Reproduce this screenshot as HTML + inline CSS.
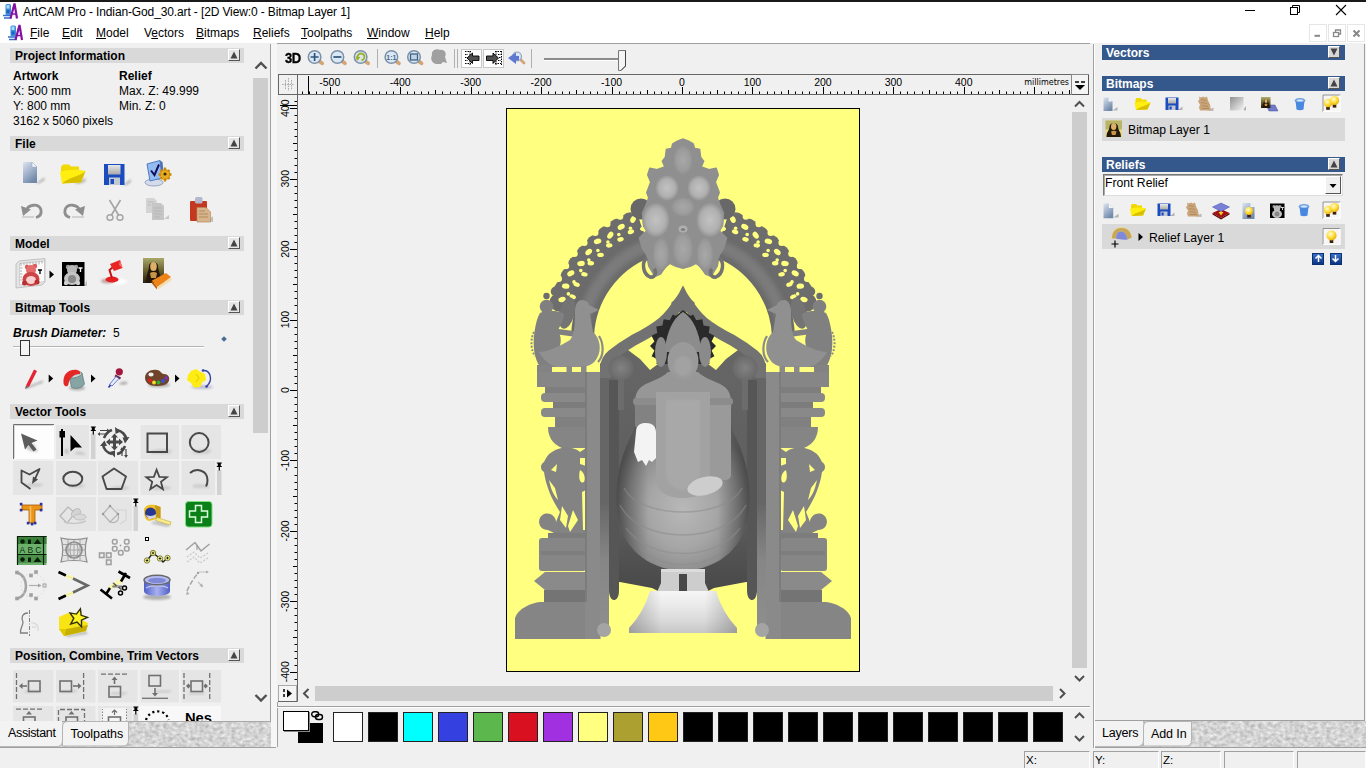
<!DOCTYPE html>
<html><head><meta charset="utf-8"><title>ArtCAM Pro</title>
<style>
*{box-sizing:border-box;margin:0;padding:0}
html,body{width:1366px;height:768px;overflow:hidden;background:#f0f0f0;font-family:"Liberation Sans",sans-serif;font-size:12px;color:#000}
.a{position:absolute}
#titlebar{left:0;top:0;width:1366px;height:22px;background:#fff;border-top:2px solid #1a1a1a}
#title{left:23px;top:5px;font-size:12px;white-space:nowrap;letter-spacing:-.125px}
#menubar{left:0;top:22px;width:1366px;height:21px;background:#fff}
#menubar span{position:absolute;top:4px;font-size:12px;white-space:nowrap}
#menubar u{text-decoration:underline;text-underline-offset:1px}
.hdrL{left:10px;width:234px;height:15px;background:#d9d9d9;font-weight:bold;font-size:12px;line-height:17px;overflow:hidden;padding-left:5px;white-space:nowrap}
.hdrR{left:1102px;width:243px;height:15px;background:#35588c;color:#fff;font-weight:bold;font-size:12px;line-height:17px;overflow:hidden;padding-left:4px;white-space:nowrap}
.colbtn{width:12px;height:12px;background:#e6e6e6;border:1px solid;border-color:#fff #555 #555 #fff}
.t{white-space:nowrap;font-size:12px;line-height:14px}
</style></head><body>
<!-- TITLE -->
<div id="titlebar" class="a"></div>
<div id="title" class="a">ArtCAM Pro - Indian-God_30.art - [2D View:0 - Bitmap Layer 1]</div>
<div id="menubar" class="a">
<span style="left:30px"><u>F</u>ile</span><span style="left:62px"><u>E</u>dit</span><span style="left:96px"><u>M</u>odel</span><span style="left:144px">V<u>e</u>ctors</span><span style="left:196px"><u>B</u>itmaps</span><span style="left:253px"><u>R</u>eliefs</span><span style="left:301px"><u>T</u>oolpaths</span><span style="left:367px"><u>W</u>indow</span><span style="left:425px"><u>H</u>elp</span>
</div>
<!--CTL--><svg class="a" style="left:0;top:0" width="1366" height="44" viewBox="0 0 1366 44"><g transform="translate(2 3)"><path d="M1 12.500H10M2 15H9.500" stroke="#3070c8" stroke-width="1.600"/><rect x="3.500" y="1" width="5.500" height="11" rx="1.500" fill="#3c8cdc"/><rect x="4.500" y="2" width="3" height="3.500" fill="#a8dcf8"/><rect x="4.500" y="7" width="3" height="3" fill="#2060b8"/><path d="M8.500 15.500L12.500 .5L15 15.500" stroke="#8410a4" stroke-width="2.200" fill="none" stroke-linejoin="miter"/><path d="M10 11H14" stroke="#8410a4" stroke-width="1.500"/></g><g transform="translate(7 24.500)"><path d="M1 12.500H10M2 15H9.500" stroke="#3070c8" stroke-width="1.600"/><rect x="3.500" y="1" width="5.500" height="11" rx="1.500" fill="#3c8cdc"/><rect x="4.500" y="2" width="3" height="3.500" fill="#a8dcf8"/><rect x="4.500" y="7" width="3" height="3" fill="#2060b8"/><path d="M8.500 15.500L12.500 .5L15 15.500" stroke="#8410a4" stroke-width="2.200" fill="none" stroke-linejoin="miter"/><path d="M10 11H14" stroke="#8410a4" stroke-width="1.500"/></g><path d="M1245 10.500H1255" stroke="#000" stroke-width="1"/><path d="M1292.500 7.500V5.500H1299.500V12.500H1297.500" stroke="#000" fill="none"/><rect x="1290.500" y="7.500" width="7" height="7" fill="#fff" stroke="#000"/><path d="M1336 5L1346 15M1346 5L1336 15" stroke="#000" stroke-width="1.100"/><rect x="1309.5" y="24.500" width="17" height="17" fill="#fff" stroke="#e6e6e6"/><rect x="1328.5" y="24.500" width="17" height="17" fill="#fff" stroke="#e6e6e6"/><rect x="1347.5" y="24.500" width="17" height="17" fill="#fff" stroke="#e6e6e6"/><path d="M1314.500 35.800H1320" stroke="#888" stroke-width="2"/><path d="M1335.500 32V30H1340.500V34H1338.500" stroke="#888" stroke-width="1.300" fill="none"/><rect x="1333.500" y="32.500" width="5" height="4" fill="#fff" stroke="#888" stroke-width="1.300"/><path d="M1353.500 30.500L1359.500 36.500M1359.500 30.500L1353.500 36.500" stroke="#888" stroke-width="2"/></svg>
<!--/CTL-->
<!--LEFT-->
<div class="a" style="left:270px;top:44px;width:1px;height:677px;background:#a0a0a0"></div><div class="a" style="left:271px;top:44px;width:6px;height:703px;background:#f6f6f6"></div>
<div class="a hdrL" style="top:48px">Project Information</div><div class="a colbtn" style="left:228px;top:49px"><svg width="10" height="10" style="position:absolute;left:0;top:0"><path d="M5 1.5L8.5 8.5H1.5Z" fill="#444"/></svg></div>
<div class="a t" style="left:13px;top:69px;font-weight:bold">Artwork</div><div class="a t" style="left:119px;top:69px;font-weight:bold">Relief</div>
<div class="a t" style="left:13px;top:84px">X: 500 mm</div><div class="a t" style="left:119px;top:84px">Max. Z: 49.999</div>
<div class="a t" style="left:13px;top:99px">Y: 800 mm</div><div class="a t" style="left:119px;top:99px">Min. Z: 0</div>
<div class="a t" style="left:13px;top:114px">3162 x 5060 pixels</div>
<div class="a hdrL" style="top:136px">File</div><div class="a colbtn" style="left:228px;top:137px"><svg width="10" height="10" style="position:absolute;left:0;top:0"><path d="M5 1.5L8.5 8.5H1.5Z" fill="#444"/></svg></div>
<!--FILEICONS--><svg class="a" style="left:0;top:0" width="272" height="721" viewBox="0 0 272 721"><defs><clipPath id="cutA"><rect x="0" y="700" width="252" height="21"/></clipPath></defs><defs>
<linearGradient id="gdoc" x1="0" y1="0" x2=".6" y2="1"><stop offset="0" stop-color="#dce4f0"/><stop offset="1" stop-color="#7088aa"/></linearGradient>
<linearGradient id="glab" x1="0" y1="0" x2="0" y2="1"><stop offset="0" stop-color="#e8e8e8"/><stop offset="1" stop-color="#a8a8a8"/></linearGradient>
<linearGradient id="gring" x1="0" y1="0" x2="1" y2="0"><stop offset="0" stop-color="#5060c8"/><stop offset=".5" stop-color="#a8b0f0"/><stop offset="1" stop-color="#5060c8"/></linearGradient>
<linearGradient id="gmona" x1="0" y1="0" x2="0" y2="1"><stop offset="0" stop-color="#a8a868"/><stop offset=".5" stop-color="#6a6030"/><stop offset="1" stop-color="#2a2010"/></linearGradient>
<filter id="ib" x="-30%" y="-30%" width="160%" height="160%"><feGaussianBlur stdDeviation=".8"/></filter>
</defs><g transform="translate(23 161)"><path d="M13 22.500L21 16.500L22 19L16 22.500Z" fill="#b4b4b4" filter="url(#ib)"/><path d="M0 1H9L14 6V22H0Z" fill="url(#gdoc)"/><path d="M9 1V6H14Z" fill="#f2f5fa" stroke="#98a8c0" stroke-width=".5"/></g><g transform="translate(60 163)"><path d="M14 20L26 15L25 19L18 21Z" fill="#b8b8b8" filter="url(#ib)"/><path d="M1 4L3 1.500H9L11 3.500H19V10H1Z" fill="#f0d800"/><path d="M0 9C6 6.500 18 6 25.500 8L21 19.500L2 20.500Z" fill="#ffee10"/><path d="M2 20.500L21 19.500L25.500 8C21 13 9 14 2 20.500Z" fill="#d8c000"/></g><g transform="translate(104 164)"><path d="M19 21L27 15L27 18L22 21.500Z" fill="#b4b4b4" filter="url(#ib)"/><path d="M0 0H20.500V21H0Z" fill="#1a4cc0"/><rect x="4" y="1" width="12.500" height="9.500" fill="url(#glab)"/><rect x="5" y="13.500" width="11" height="7.500" fill="#c4c8d0"/><rect x="6.500" y="15" width="3.500" height="5" fill="#1a4cc0"/></g><g transform="translate(144 160)"><ellipse cx="10" cy="22.500" rx="9" ry="3.500" fill="#d4dcec" stroke="#8494b4" stroke-width=".8"/><path d="M3 4L16 .5L18 18L6 21Z" fill="#94bcf0" stroke="#4c7cc4"/><path d="M16 .5L18.500 2L20 18L18 18Z" fill="#5070b0"/><path d="M7 10.500L10.500 15L15 4.500" stroke="#141060" stroke-width="2" fill="none"/><circle cx="21" cy="14.500" r="5.500" fill="#e4a41c"/><path d="M21 7.500V21.500M14.500 14.500H27.500M16.500 10L25.500 19M25.500 10L16.500 19" stroke="#c88810" stroke-width="2.400"/><circle cx="21" cy="14.500" r="4" fill="#e8ac24"/><circle cx="21" cy="14" r="1.600" fill="#3a2808"/></g><g transform="translate(21 202)"><path d="M5.500 9C6.500 2 18 1 20 8C20.800 12 18.500 14.500 15 15.500" stroke="#8e8e8e" stroke-width="2.800" fill="none"/><path d="M0 4L10 7.500L2 14Z" fill="#8e8e8e"/><path d="M1 15H13" stroke="#c8c8c8" stroke-width="1.500"/></g><g transform="translate(63 202)"><g transform="translate(22 0) scale(-1 1)"><path d="M5.500 9C6.500 2 18 1 20 8C20.800 12 18.500 14.500 15 15.500" stroke="#8e8e8e" stroke-width="2.800" fill="none"/><path d="M0 4L10 7.500L2 14Z" fill="#8e8e8e"/><path d="M1 15H13" stroke="#c8c8c8" stroke-width="1.500"/></g></g><g transform="translate(106 199)"><path d="M3.500 1L12.500 16M14.500 1L5.500 16" stroke="#a4a4a4" stroke-width="1.600"/><ellipse cx="4" cy="18.500" rx="3" ry="2.800" fill="none" stroke="#a4a4a4" stroke-width="1.400"/><ellipse cx="14" cy="18.500" rx="3" ry="2.800" fill="none" stroke="#a4a4a4" stroke-width="1.400"/></g><g transform="translate(146 198)"><path d="M18 21L23 17V21Z" fill="#c8c8c8"/><path d="M0 0H8L11 3V15H0Z" fill="#d4d4d4"/><path d="M6 5H15L18 8V22H6Z" fill="#c6c6c6"/><path d="M1.500 4H8M1.500 7H5M8 10H16M8 13H16M8 16H16M8 19H14" stroke="#b4b4b4" stroke-width=".8"/></g><g transform="translate(190 196)"><path d="M17 25L23 20V26Z" fill="#c0c0c0"/><rect x="0" y="5" width="17" height="20" rx="1" fill="#c43820"/><rect x="5" y="1" width="7.500" height="6.500" rx="1.500" fill="#b4b8cc"/><path d="M7 11.500H16L20.500 16V26H7Z" fill="#d8b48c" stroke="#b48c5c" stroke-width=".7"/><path d="M9 15H15M9 18H18M9 21H18" stroke="#a88050" stroke-width=".8"/></g><g transform="translate(15 258)"><path d="M1 6L4 3L30 .5L30 24L27 27L1 30Z" fill="#e4e4e4" stroke="#b0b0b0" stroke-width=".7"/><path d="M4.500 5.500L29.500 3V23.500L4.500 27Z" fill="#fafafa" stroke="#b8b8b8" stroke-width=".6"/><path d="M6 5V8M9 4.800V7M12 4.500V7.500M15 4.200V6.500M18 4V7M21 3.700V6M24 3.500V6.500M27 3.200V5.500M5 10H7.500M5 13H7M5 16H7.500M5 19H7M5 22H7.500" stroke="#909090" stroke-width=".7"/><circle cx="12" cy="9" r="2.200" fill="#e05858"/><circle cx="20" cy="8" r="2.200" fill="#e05858"/><circle cx="16" cy="12" r="5" fill="#e46c6c"/><ellipse cx="16" cy="21" rx="8.500" ry="7" fill="#cc4444"/><ellipse cx="16" cy="22" rx="5" ry="4" fill="#f8d0d0"/><circle cx="9.500" cy="25" r="2.500" fill="#b83030"/><circle cx="22" cy="24" r="2.500" fill="#b83030"/><path d="M23 12H27M25 12V16" stroke="#000" stroke-width="1.300"/></g><g transform="translate(49.5 270.5)"><path d="M0 0V8L4.500 4Z" fill="#000"/></g><g transform="translate(62 262)"><path d="M22 24L25 18V24Z" fill="#c0c0c0"/><rect x="0" y="0" width="22.500" height="24" fill="#000"/><circle cx="6" cy="5" r="2.200" fill="#a0a0a0"/><circle cx="14" cy="5" r="2.200" fill="#a0a0a0"/><circle cx="10" cy="8" r="5" fill="#b8b8b8"/><ellipse cx="10" cy="16.500" rx="8" ry="6.500" fill="#c4c4c4"/><ellipse cx="10" cy="17" rx="4" ry="4" fill="#888"/><circle cx="4" cy="21" r="2.200" fill="#d0d0d0"/><circle cx="16" cy="21" r="2.200" fill="#d0d0d0"/><path d="M16.500 6H20.500M18.500 6V10" stroke="#fff" stroke-width="1.300"/></g><g transform="translate(100 260)"><ellipse cx="16" cy="21.500" rx="11" ry="3" fill="#fff" filter="url(#ib)"/><ellipse cx="8" cy="21" rx="7" ry="2.500" fill="#c0a0a0" filter="url(#ib)"/><ellipse cx="12" cy="19.500" rx="6.500" ry="3" fill="#e42020"/><path d="M12 18L9.500 10L13 7" stroke="#c41414" stroke-width="2" fill="none"/><path d="M10 4L20 0L22.500 8L14 11Z" fill="#e82424"/><path d="M20 0L22.500 8L19 5Z" fill="#f87070"/></g><g transform="translate(143 258)"><rect x="0" y="0" width="21" height="25" fill="url(#gmona)"/><path d="M3 25C3 16 6 13 6 8C6 3 15 3 15 8C15 13 18 16 18 25Z" fill="#241808"/><ellipse cx="10.500" cy="8.500" rx="3.300" ry="4.500" fill="#dcb068"/><path d="M7 15C9 13.500 12 13.500 14 15L13 20H8Z" fill="#c89448"/><path d="M27 19L29 22L15 31.500L14 29Z" fill="#f4dcb0"/><path d="M9 22.500L23 15L28 19L14 29Z" fill="#ec8418"/><path d="M9 22.500L14 29L14 31.500L8.500 25Z" fill="#b45c0c"/></g><g transform="translate(24 368)"><path d="M2 20L19 13.500" stroke="#b4b4b4" stroke-width="2.200" filter="url(#ib)"/><path d="M2 17.500L10 1.500L13 3L5 19Z" fill="#e42434"/><path d="M2 17.500L5 19L1 21Z" fill="#805858"/></g><g transform="translate(48.7 374.5)"><path d="M0 0V8L4.500 4Z" fill="#000"/></g><g transform="translate(63 369)"><ellipse cx="14" cy="19" rx="8" ry="2.500" fill="#b0b0b0" filter="url(#ib)"/><path d="M6 8L19 4L21.500 15C19 19.500 11 20.500 8.500 18Z" fill="#86a4a4" stroke="#5c7878" stroke-width=".7"/><ellipse cx="12.500" cy="6" rx="6.800" ry="2.500" transform="rotate(-17 12.500 6)" fill="#c8d8d8" stroke="#5c7878" stroke-width=".7"/><path d="M.5 14C0 6 4 1 12 .8C16 .8 18 3 17 5C12 5 6.500 8 5.500 15C5 18.500 1 18 .5 14Z" fill="#e42828"/></g><g transform="translate(91 374.5)"><path d="M0 0V8L4.500 4Z" fill="#000"/></g><g transform="translate(107 368)"><path d="M12 16C15 13 19 13 21 15C19 17 15 17.500 12 16Z" fill="#b0b0b0" filter="url(#ib)"/><circle cx="12.300" cy="3.800" r="3.600" fill="#a41840"/><path d="M8.500 6.500L14 9.500L13 11.500L7.500 8.500Z" fill="#70203c"/><path d="M9 8.500L12 10.500L5 18L2.500 16.500Z" fill="#e8eefc" stroke="#4858c0" stroke-width=".8"/><path d="M3.500 17L1.500 19.500" stroke="#2838a8" stroke-width="1.600"/></g><g transform="translate(144 369)"><ellipse cx="15" cy="16" rx="11" ry="2.500" fill="#b4b4b4" filter="url(#ib)"/><path d="M1 9C1 3 7 0 13 1C17 1.500 17 5 20 5C24 5 26 8 25 11.500C24 16 18 17 12 17C6 17 1 14 1 9Z" fill="#70442a"/><ellipse cx="7" cy="5.500" rx="2.600" ry="2" fill="#f0f0f0"/><circle cx="6" cy="11.500" r="1.900" fill="#e02020"/><circle cx="10" cy="13.500" r="1.900" fill="#f0e020"/><circle cx="14.500" cy="13.500" r="1.900" fill="#30b030"/><circle cx="19" cy="12" r="1.900" fill="#3050e0"/><circle cx="22" cy="9" r="1.700" fill="#8030c0"/></g><g transform="translate(175 374.5)"><path d="M0 0V8L4.500 4Z" fill="#000"/></g><g transform="translate(186 368)"><ellipse cx="16" cy="19" rx="11" ry="2" fill="#c0c0d0" filter="url(#ib)"/><path d="M17 2.500C24.500 2 27.500 12 20.500 18.500" stroke="#3444a4" stroke-width="1.400" fill="none"/><circle cx="17" cy="2.500" r="1.300" fill="#3444a4"/><circle cx="20.500" cy="18.500" r="1.300" fill="#3444a4"/><path d="M5 3L10 1L14 3.500L19 6L20 12L16 14.500L14 19L8 19.500L5 15L1 12L2 7Z" fill="#ffec14"/><path d="M10 6L13 10L10 14" stroke="#e4d000" stroke-width="1.200" fill="none"/></g><rect x="13" y="424" width="41" height="35" fill="#fdfdfd"/><path d="M13.500 459V424.500H54" stroke="#707070" fill="none"/><path d="M14.500 458V425.500H53" stroke="#d8d8d8" fill="none"/><path d="M24 447L34 444L38 452L30 451Z" fill="#c8c8c8" filter="url(#ib)"/><path d="M21 433.500L37.500 440.500L31.500 443L36.500 449.500L33.500 451.500L28.500 445L25 449.500Z" fill="#5c5c5c"/><rect x="56" y="425" width="33" height="34" fill="#e5e5e5"/><path d="M64 452C66 446 70 448 68 455M74 454C78 450 84 452 86 455Z" fill="#c4c4c4" filter="url(#ib)"/><path d="M62 429V456" stroke="#000" stroke-width="2"/><rect x="59.500" y="431" width="5.500" height="6.500" fill="#000"/><path d="M70.500 435L82 447.500H75L70.500 451.500Z" fill="#000"/><rect x="91" y="434" width="4.500" height="25" fill="#d2d2d2"/><path d="M90.8 427.0H95.8M90.8 430.5H95.8M93.3 430.5V434.5" stroke="#000" stroke-width="1.200"/><rect x="91.8" y="427.0" width="3" height="3.500" fill="#000"/><g fill="#484848" stroke="none"><path d="M114.500 433.500L118 437.500H116V440.500H119V438.500L123 442L119 445.500V443.500H116V446.500H118L114.500 450.500L111 446.500H113V443.500H110V445.500L106 442L110 438.500V440.500H113V437.500H111Z"/></g><path d="M104 438C106 433 109 431 112 430" stroke="#484848" stroke-width="2.600" fill="none"/><path d="M117 430C122 431 126 435 126.500 440" stroke="#484848" stroke-width="2.600" fill="none"/><path d="M125 446C123 451 120 453.500 117 454" stroke="#484848" stroke-width="2.600" fill="none"/><path d="M112 454C107 453 103.500 449 103 444" stroke="#484848" stroke-width="2.600" fill="none"/><path d="M115 427L121 431.500L115.500 434Z M129.500 437L125 443.500L122.500 437.500Z M115 457.500L109.500 452L115 450.500Z M100 446L104.500 440.500L107 446Z" fill="#484848"/><path d="M100 430.500H107M100 434H107" stroke="#484848" stroke-width="1.200"/><path d="M107 428.500L109.500 430.500L107 432.500Z M100 432L97.500 434L100 436Z" fill="#484848"/><path d="M122 449V456M126 449V456" stroke="#484848" stroke-width="1.200"/><path d="M120 450L122 447L124 450Z M124 455L126 458L128 455Z" fill="#484848"/><rect x="140.5" y="425" width="38.5" height="34" fill="#e5e5e5"/><path d="M150 451C158 448 166 449 172 450L170 454H152Z" fill="#cfcfcf" filter="url(#ib)"/><rect x="147.500" y="433.500" width="19.500" height="18.500" fill="none" stroke="#484848" stroke-width="2"/><rect x="181.5" y="425" width="39.5" height="34" fill="#e5e5e5"/><path d="M192 452C200 448 208 449 212 450L208 454H194Z" fill="#cfcfcf" filter="url(#ib)"/><circle cx="199.200" cy="442.500" r="9.400" fill="none" stroke="#484848" stroke-width="2"/><rect x="13" y="461" width="40.5" height="34" fill="#e5e5e5"/><path d="M24 485C30 482 38 483 44 484L40 487H28Z" fill="#cfcfcf" filter="url(#ib)"/><path d="M30.500 489L21.500 482.500V470.500L29.500 474.500L39.500 469L34 481" stroke="#484848" stroke-width="1.800" fill="none" stroke-linejoin="round"/><path d="M32 484L33 476.500L38 479.500Z" fill="#484848"/><rect x="56" y="461" width="40.5" height="34" fill="#e5e5e5"/><path d="M68 486C74 483 82 484 86 485L82 488H70Z" fill="#cfcfcf" filter="url(#ib)"/><ellipse cx="72.800" cy="478.800" rx="9.500" ry="7" fill="none" stroke="#484848" stroke-width="2"/><rect x="98" y="461" width="40" height="34" fill="#e5e5e5"/><path d="M110 488C116 485 124 486 130 487L126 490H112Z" fill="#cfcfcf" filter="url(#ib)"/><path d="M114 468.500L126 476.500L121.500 489H106.500L102.500 476.500Z" fill="none" stroke="#484848" stroke-width="1.900" stroke-linejoin="round"/><rect x="140.5" y="461" width="38.5" height="34" fill="#e5e5e5"/><path d="M152 488C158 485 166 486 172 487L168 490H154Z" fill="#cfcfcf" filter="url(#ib)"/><path d="M156.6 469.7L159.3 476.8L166.9 477.2L161.0 481.9L162.9 489.2L156.6 485.1L150.3 489.2L152.2 481.9L146.3 477.2L153.9 476.8Z" fill="none" stroke="#484848" stroke-width="1.800" stroke-linejoin="miter"/><rect x="181.5" y="461" width="33.5" height="34" fill="#e5e5e5"/><path d="M192 485C198 483 204 484 210 486L208 488H194Z" fill="#cfcfcf" filter="url(#ib)"/><path d="M190 473C196 467.500 207.500 470 207.500 480C207.500 483 207 485 206 486.500" fill="none" stroke="#484848" stroke-width="2"/><rect x="217" y="470" width="4.500" height="25" fill="#d2d2d2"/><path d="M216.8 463.0H221.8M216.8 466.5H221.8M219.3 466.5V470.5" stroke="#000" stroke-width="1.200"/><rect x="217.8" y="463.0" width="3" height="3.500" fill="#000"/><g transform="translate(20 503)"><path d="M3 17H22" stroke="#c0c0c0" stroke-width="3" filter="url(#ib)"/><path d="M2 2H22V7H15V20H9V7H2Z" fill="#ec9418" stroke="#a45c08" stroke-width=".8"/><path d="M10.500 3V19" stroke="#f8c060" stroke-width="1.500"/><rect x="-0.19999999999999996" y="-0.19999999999999996" width="2.600" height="2.600" fill="#2830a0"/><rect x="19.8" y="-0.19999999999999996" width="2.600" height="2.600" fill="#2830a0"/><rect x="-0.19999999999999996" y="5.8" width="2.600" height="2.600" fill="#2830a0"/><rect x="19.8" y="5.8" width="2.600" height="2.600" fill="#2830a0"/><rect x="6.8" y="18.8" width="2.600" height="2.600" fill="#2830a0"/><rect x="13.8" y="18.8" width="2.600" height="2.600" fill="#2830a0"/><rect x="10.8" y="19.8" width="2.600" height="2.600" fill="#2830a0"/></g><rect x="56" y="497" width="40" height="34" fill="#e5e5e5"/><path d="M60 516L68 507L75 513L67 523Z" fill="none" stroke="#b4b4b4" stroke-width="1.200"/><ellipse cx="76" cy="513" rx="5" ry="3.500" transform="rotate(-40 76 513)" fill="#d4d4d4" stroke="#b8b8b8"/><ellipse cx="80" cy="517" rx="6" ry="3" fill="#dadada" stroke="#c0c0c0"/><path d="M64 522C70 524 80 524 86 521" stroke="#c8c8c8" stroke-width="1.500" fill="none"/><rect x="98" y="497" width="34" height="34" fill="#e5e5e5"/><path d="M103 514L110 506L118 514L110 522Z" fill="none" stroke="#b4b4b4" stroke-width="1.200"/><path d="M110 522C116 524 120 520 118 514" fill="none" stroke="#b4b4b4" stroke-width="1.200"/><circle cx="103" cy="514" r="1.200" fill="#999"/><circle cx="110" cy="506" r="1.200" fill="#999"/><circle cx="118" cy="514" r="1.200" fill="#999"/><path d="M116 510H126V520L120 524" fill="none" stroke="#d4d4d4" stroke-width="1.200"/><rect x="133.5" y="506" width="4.500" height="25" fill="#d2d2d2"/><path d="M133.3 499.0H138.3M133.3 502.5H138.3M135.8 502.5V506.5" stroke="#000" stroke-width="1.200"/><rect x="134.3" y="499.0" width="3" height="3.500" fill="#000"/><g transform="translate(143 504)"><path d="M8 18C14 16 22 18 28 21L24 23L10 20Z" fill="#c0c0c0" filter="url(#ib)"/><path d="M1 6C1 2 6 0 12 1L17.500 3V14L6 17C2 16 1 12 1 6Z" fill="#f0c028"/><path d="M12 1L17.500 3V14L13.500 15Z" fill="#c89818"/><circle cx="7.500" cy="9" r="5.500" fill="#283890"/><path d="M2.500 10.500C5 12.500 10 12.500 13 10L12.500 13.500L6 15.500Z" fill="#d4d4e4"/><path d="M14 13.500L28 18L27 21L12.500 16.500Z" fill="#f8ec90" stroke="#c4a830" stroke-width=".6"/></g><g transform="translate(185 501)"><rect x=".5" y=".5" width="26.500" height="25.500" rx="3" fill="#0c8018" stroke="#7ce07c" stroke-width="1"/><path d="M10.500 4.500H16.500V10H22.500V16H16.500V21.500H10.500V16H4.500V10H10.500Z" fill="none" stroke="#dcffdc" stroke-width="1.500"/></g><g transform="translate(17 536)"><rect x="0" y="0" width="29.500" height="29" fill="#6cb06c"/><rect x="0" y="0" width="29.500" height="8" fill="#3c803c"/><rect x="0" y="19" width="29.500" height="8" fill="#4c904c"/><path d="M0 .5H29.500M0 18.500H29.500M.5 0V29M26.500 0V29" stroke="#082008" stroke-width="1.200"/><circle cx="5.500" cy="5.500" r="2.300" fill="#082008"/><rect x="11" y="3.500" width="3" height="4.500" fill="#082008"/><path d="M16.500 8L20.500 3L24.500 8Z" fill="#082008"/><circle cx="5.500" cy="23.500" r="2.300" fill="#082008"/><rect x="11" y="21.500" width="3" height="4.500" fill="#082008"/><path d="M16.500 26L20.500 21L24.500 26Z" fill="#082008"/><text x="2.500" y="16.800" font-family="Liberation Sans, sans-serif" font-size="8.500" fill="#0c300c" textLength="22">ABC</text></g><g transform="translate(60 537)"><path d="M1 1C8 3 20 3 27 1C25 8 25 18 27 25C20 23 8 23 1 25C3 18 3 8 1 1Z" fill="#e2e2e2" stroke="#8c8c8c" stroke-width="1.200"/><path d="M2.500 7.500H25.500M2.500 13H25.500M2.500 18.500H25.500M8 2.500V23.500M14 3V23M20 2.500V23.500" stroke="#a4a4a4" stroke-width="1"/><circle cx="14" cy="13" r="8" fill="none" stroke="#8c8c8c" stroke-width="1.600"/><ellipse cx="14" cy="13" rx="4" ry="8" fill="none" stroke="#a0a0a0" stroke-width="1"/></g><rect x="99.5" y="553" width="4.500" height="4.500" fill="none" stroke="#a0a0a0" stroke-width="1.600"/><rect x="106.5" y="553" width="4.500" height="4.500" fill="none" stroke="#a0a0a0" stroke-width="1.600"/><rect x="106.5" y="560" width="4.500" height="4.500" fill="none" stroke="#a0a0a0" stroke-width="1.600"/><rect x="112.5" y="539.5" width="4.500" height="4.500" rx="1.500" fill="none" stroke="#a0a0a0" stroke-width="1.600"/><rect x="124.5" y="539.5" width="4.500" height="4.500" rx="1.500" fill="none" stroke="#a0a0a0" stroke-width="1.600"/><rect x="112.5" y="546.5" width="4.500" height="4.500" rx="1.500" fill="none" stroke="#a0a0a0" stroke-width="1.600"/><rect x="124.5" y="546.5" width="4.500" height="4.500" rx="1.500" fill="none" stroke="#a0a0a0" stroke-width="1.600"/><rect x="118.5" y="550.5" width="4.500" height="4.500" rx="1.500" fill="none" stroke="#a0a0a0" stroke-width="1.600"/><circle cx="120.500" cy="545.500" r=".9" fill="#a0a0a0"/><g transform="translate(144 537)"><rect x="1.500" y=".5" width="3" height="3" fill="#fff" stroke="#000" stroke-width="1"/><path d="M3 23.500L9 16L16 21.500L19 25L23.500 21" stroke="#202020" stroke-width="1.400" fill="none"/><circle cx="3" cy="23.5" r="2.700" fill="#f4f48c" stroke="#50500c" stroke-width=".7"/><path d="M1.7 23.5H4.3M3 22.2V24.8" stroke="#000" stroke-width=".8"/><circle cx="9" cy="16" r="2.700" fill="#f4f48c" stroke="#50500c" stroke-width=".7"/><path d="M7.7 16H10.3M9 14.7V17.3" stroke="#000" stroke-width=".8"/><circle cx="16" cy="21.5" r="2.700" fill="#f4f48c" stroke="#50500c" stroke-width=".7"/><path d="M14.7 21.5H17.3M16 20.2V22.8" stroke="#000" stroke-width=".8"/><circle cx="23.5" cy="21" r="2.700" fill="#f4f48c" stroke="#50500c" stroke-width=".7"/><path d="M22.2 21H24.8M23.5 19.7V22.3" stroke="#000" stroke-width=".8"/></g><path d="M186 550L195 542.500L201 551L209.500 544" stroke="#a0a0a0" stroke-width="1.500" fill="none"/><path d="M197 545V550" stroke="#909090" stroke-width="1"/><path d="M187 557L194 552L200 558L208 553M187 562L194 557L200 563L208 558" stroke="#c8c8c8" stroke-width="1.200" fill="none" stroke-dasharray="2 1.500"/><path d="M17 572.500C29 576 29 596 17 598.500" stroke="#a4a4a4" stroke-width="2.600" fill="none"/><circle cx="33" cy="585.500" r="12" fill="none" stroke="#dcdcdc" stroke-width="1" stroke-dasharray="2 2"/><path d="M29 585.500H41" stroke="#b0b0b0" stroke-width="1.200"/><path d="M38 583.500L41 585.500L38 587.500Z" fill="#a0a0a0"/><rect x="15.2" y="570.7" width="3.600" height="3.600" fill="#a0a0a0"/><rect x="15.2" y="596.7" width="3.600" height="3.600" fill="#a0a0a0"/><rect x="29.2" y="573.7" width="3.600" height="3.600" fill="#a0a0a0"/><rect x="29.2" y="593.2" width="3.600" height="3.600" fill="#a0a0a0"/><rect x="34.2" y="570.2" width="3.600" height="3.600" fill="#a0a0a0"/><rect x="34.2" y="596.7" width="3.600" height="3.600" fill="#a0a0a0"/><rect x="43" y="584" width="3" height="3" fill="none" stroke="#a0a0a0"/><path d="M58.500 572L66 575.500" stroke="#000" stroke-width="2.600"/><path d="M58.500 599L66 595.500" stroke="#000" stroke-width="2.600"/><path d="M66 575.500L73 578.500M66 595.500L73 592.500" stroke="#f8f8a8" stroke-width="3.500"/><path d="M66 575.500L73 578.500M66 595.500L73 592.500" stroke="#c8c870" stroke-width=".8" stroke-dasharray="1 1.500"/><path d="M73 578.500L87.500 585.500L73 592.500" stroke="#686868" stroke-width="2.600" fill="none"/><path d="M110 588L122 580" stroke="#f8f8a8" stroke-width="4"/><path d="M118.500 571.500L130 578M126 573L121 581.500" stroke="#000" stroke-width="2.600" fill="none"/><path d="M100.500 589.500L112 598.500M110 588L105.500 595" stroke="#000" stroke-width="2.600" fill="none"/><path d="M113 583L121.500 589.500M112.500 586.500H122" stroke="#000" stroke-width="1.300"/><path d="M113 583L121.500 589.500M112.500 586.500H122" stroke="#fff" stroke-width=".5"/><circle cx="120.500" cy="593" r="2" fill="none" stroke="#000" stroke-width="1.500"/><circle cx="124.500" cy="588" r="2" fill="none" stroke="#000" stroke-width="1.500"/><g transform="translate(143 574)"><ellipse cx="14" cy="23" rx="14" ry="3" fill="#b0b0b0" filter="url(#ib)"/><path d="M1 6V17C1 23.500 27 23.500 27 17V6Z" fill="url(#gring)"/><path d="M3 14C8 11 20 11 25 14" stroke="#c8cce8" stroke-width="1.200" fill="none"/><ellipse cx="14" cy="6" rx="13" ry="4.800" fill="#b4bcf0" stroke="#686868" stroke-width="1.400"/><ellipse cx="14" cy="6.500" rx="9" ry="2.800" fill="#8088d8"/></g><path d="M187 591C190 584 194 578 198 573" stroke="#a8a8a8" stroke-width="1.600" fill="none" stroke-dasharray="5 2"/><path d="M199 572H208M198 582L203 587" stroke="#c0c0c0" stroke-width="1.200"/><path d="M206 570.500L209 572L206 573.500Z M203 587L199.500 586L202 583.500Z M187 591L186 595L189.500 594Z" fill="#b0b0b0"/><circle cx="198" cy="573" r="1.200" fill="#a0a0a0"/><path d="M29.500 610V636" stroke="#808080" stroke-width="1" stroke-dasharray="4 1.500 1 1.500"/><path d="M28 613C22 613 21 618 23 622C23 626 20 628 20.500 633H28" stroke="#808080" stroke-width="1.300" fill="none"/><path d="M31 623C36 622 39 626 38 631" stroke="#d8d8d8" stroke-width="1.200" fill="none"/><path d="M32 627H36" stroke="#d0d0d0"/><g transform="translate(58 608)"><path d="M6 27L28 23L30 26L10 29Z" fill="#c0c0c0" filter="url(#ib)"/><path d="M1 9L10 5L30 15L28 23L6 28L1 21Z" fill="#f8e414"/><path d="M6 28L28 23L30 17L8 21Z" fill="#c8b000"/><path d="M1 21L8 21L6 28Z" fill="#e0c800"/><path d="M22.4 0.8L23.2 7.3L29.5 9.4L23.5 12.2L23.5 18.8L19.0 14.1L12.7 16.1L15.8 10.3L12.0 4.9L18.4 6.1Z" fill="#fff428" stroke="#303008" stroke-width="1.400" stroke-linejoin="miter"/></g><rect x="13" y="670" width="40.5" height="32.5" fill="#e5e5e5"/><rect x="56" y="670" width="39.5" height="32.5" fill="#e5e5e5"/><rect x="98" y="670" width="39.5" height="32.5" fill="#e5e5e5"/><rect x="140.5" y="670" width="38.5" height="32.5" fill="#e5e5e5"/><rect x="181.5" y="670" width="39.5" height="32.5" fill="#e5e5e5"/><path d="M26 690H42L39 693H24Z" fill="#d0d0d0" filter="url(#ib)"/><path d="M16.500 673V700" stroke="#707070" stroke-width="1.300" stroke-dasharray="5 2"/><path d="M20 686H27" stroke="#707070" stroke-width="1.600"/><path d="M19 686L22.500 683V689Z" fill="#707070"/><rect x="28.500" y="681" width="11.500" height="10.500" fill="none" stroke="#707070" stroke-width="1.600"/><path d="M62 690H78L75 693H60Z" fill="#d0d0d0" filter="url(#ib)"/><path d="M83.600 673V700" stroke="#707070" stroke-width="1.300" stroke-dasharray="5 2"/><path d="M73 686H80" stroke="#707070" stroke-width="1.600"/><path d="M81.500 686L78 683V689Z" fill="#707070"/><rect x="60" y="681" width="11.500" height="10.500" fill="none" stroke="#707070" stroke-width="1.600"/><path d="M112 692H128L125 695H110Z" fill="#d0d0d0" filter="url(#ib)"/><path d="M101 674.200H127" stroke="#707070" stroke-width="1.300" stroke-dasharray="5 2"/><path d="M114.500 678V684" stroke="#707070" stroke-width="1.600"/><path d="M114.500 676.500L111.500 680H117.500Z" fill="#707070"/><rect x="109" y="686.500" width="11.500" height="10.500" fill="none" stroke="#707070" stroke-width="1.600"/><path d="M156 690H172L169 693H154Z" fill="#d0d0d0" filter="url(#ib)"/><path d="M142 698.300H168" stroke="#707070" stroke-width="1.300"/><path d="M155 688V694" stroke="#707070" stroke-width="1.600"/><path d="M155 696.500L152 693H158Z" fill="#707070"/><rect x="149" y="675.500" width="11.500" height="10.500" fill="none" stroke="#707070" stroke-width="1.600"/><path d="M190 692H206L203 695H188Z" fill="#d0d0d0" filter="url(#ib)"/><path d="M184 673V700M209.700 673V700" stroke="#707070" stroke-width="1.300" stroke-dasharray="5 2"/><path d="M187 686H190M204 686H207" stroke="#707070" stroke-width="1.600"/><path d="M186 686L188.500 683.500L190.500 686L188.500 688.500Z M208 686L205.500 683.500L203.500 686L205.500 688.500Z" fill="#707070"/><rect x="191" y="681" width="11.500" height="10.500" fill="none" stroke="#707070" stroke-width="1.600"/><g clip-path="url(#cutA)"><rect x="13" y="706" width="40.5" height="15" fill="#e5e5e5"/><rect x="56" y="706" width="39.5" height="15" fill="#e5e5e5"/><rect x="98" y="706" width="34" height="15" fill="#e5e5e5"/><rect x="139" y="706" width="82" height="15" fill="#f8f8f8"/><path d="M16 709.200H42" stroke="#707070" stroke-width="1.300" stroke-dasharray="5 2"/><path d="M29 711L26 714.500H32Z" fill="#707070"/><rect x="23.500" y="717" width="11.500" height="10" fill="none" stroke="#707070" stroke-width="1.600"/><path d="M58.500 722V709.500H84.500V722" stroke="#707070" stroke-width="1.300" stroke-dasharray="5 2" fill="none"/><path d="M71.500 711L68.500 714.500H74.500Z" fill="#707070"/><rect x="66" y="717" width="11.500" height="10" fill="none" stroke="#707070" stroke-width="1.600"/><rect x="101.500" y="708" width="25" height="14" fill="#f4f4f4"/><path d="M102.500 722V709M126.500 722V709" stroke="#808080" stroke-width="1" stroke-dasharray="1.500 1.500" fill="none"/><path d="M114.500 710V715M112 712.500L114.500 710L117 712.500" stroke="#707070" stroke-width="1.200" fill="none"/><rect x="108.500" y="717" width="12" height="10" fill="none" stroke="#707070" stroke-width="1.600"/><rect x="133.5" y="714" width="4.500" height="8" fill="#d2d2d2"/><path d="M133.3 707.0H138.3M133.3 710.5H138.3M135.8 710.5V714.5" stroke="#000" stroke-width="1.200"/><rect x="134.3" y="707.0" width="3" height="3.500" fill="#000"/><path d="M146 720C148 713 156 709 164 713C167 715 168 718 168.500 720" stroke="#000" stroke-width="2.200" fill="none" stroke-dasharray="2.200 2.800"/><text x="185" y="722.500" font-family="Liberation Sans, sans-serif" font-weight="bold" font-size="15" textLength="27" lengthAdjust="spacingAndGlyphs">Nes</text><text x="185" y="730" font-family="Liberation Sans, sans-serif" font-weight="bold" font-size="15" textLength="27" lengthAdjust="spacingAndGlyphs" opacity=".9">Nes</text></g></svg><!--/FILEICONS-->
<div class="a hdrL" style="top:236px">Model</div><div class="a colbtn" style="left:228px;top:237px"><svg width="10" height="10" style="position:absolute;left:0;top:0"><path d="M5 1.5L8.5 8.5H1.5Z" fill="#444"/></svg></div>
<!--MODELICONS-->
<div class="a hdrL" style="top:300px">Bitmap Tools</div><div class="a colbtn" style="left:228px;top:301px"><svg width="10" height="10" style="position:absolute;left:0;top:0"><path d="M5 1.5L8.5 8.5H1.5Z" fill="#444"/></svg></div>
<div class="a t" style="left:13px;top:326px"><b><i>Brush Diameter:</i></b>&nbsp; 5</div>
<div class="a" style="left:13px;top:346px;width:191px;height:2px;background:#b4b4b4;border-bottom:1px solid #fff"></div>
<div class="a" style="left:20px;top:340px;width:10px;height:16px;background:#f4f4f4;border:1px solid #333"></div>
<div class="a" style="left:222px;top:337px;width:4px;height:4px;background:#4a6a9c;transform:rotate(45deg)"></div>
<!--BITMAPICONS-->
<div class="a hdrL" style="top:404px">Vector Tools</div><div class="a colbtn" style="left:228px;top:405px"><svg width="10" height="10" style="position:absolute;left:0;top:0"><path d="M5 1.5L8.5 8.5H1.5Z" fill="#444"/></svg></div>
<!--VECTORICONS-->
<div class="a hdrL" style="top:648px">Position, Combine, Trim Vectors</div><div class="a colbtn" style="left:228px;top:649px"><svg width="10" height="10" style="position:absolute;left:0;top:0"><path d="M5 1.5L8.5 8.5H1.5Z" fill="#444"/></svg></div>
<!--ALIGNICONS-->
<div class="a" style="left:253px;top:55px;width:17px;height:654px;background:#f0f0f0"></div><div class="a" style="left:253px;top:78px;width:15px;height:355px;background:#cdcdcd"></div>
<svg class="a" style="left:253px;top:55px" width="17" height="654"><path d="M2.5 13.5L8 8L13.5 13.5" fill="none" stroke="#505050" stroke-width="2.4"/><path d="M2.5 640L8 645.5L13.5 640" fill="none" stroke="#505050" stroke-width="2.4"/></svg>
<svg class="a" style="left:0;top:721px" width="277" height="27"><defs><filter id="nz" x="0" y="0" width="100%" height="100%" color-interpolation-filters="sRGB"><feTurbulence type="fractalNoise" baseFrequency=".22 .3" numOctaves="2" seed="4"/><feColorMatrix values=".34 0 0 0 .66 .34 0 0 0 .66 .34 0 0 0 .66 0 0 0 0 1"/></filter></defs><rect width="271" height="26" filter="url(#nz)"/><rect y="0" width="271" height="1" fill="#a8a8a8"/><rect y="26" width="276" height="1" fill="#a0a0a0"/><path d="M0 0H62V19Q62 25 56 25H0Z" fill="#f3f3f3"/><path d="M62.500 25V6Q62.500 .5 68 .5H128.500V19Q128.500 25 123 25Z" fill="#f3f3f3" stroke="#b4b4b4"/><path d="M0 25.500H58Q62.500 25 62.500 20" fill="none" stroke="#b8b8b8"/></svg>
<div class="a" style="left:8px;top:726px;font-size:12.5px;white-space:nowrap;letter-spacing:-.35px">Assistant</div><div class="a" style="left:70.500px;top:726.500px;font-size:12.5px;white-space:nowrap;letter-spacing:-.1px">Toolpaths</div>
<!--CENTER-->
<div class="a" style="left:277px;top:43px;width:813px;height:1px;background:#a0a0a0"></div>
<div class="a" style="left:277px;top:702px;width:1px;height:45px;background:#a0a0a0"></div>
<div class="a" style="left:284.500px;top:49px;font-weight:bold;font-size:15.500px;letter-spacing:-.5px;transform:scaleX(.84);transform-origin:0 0;-webkit-text-stroke:.35px #000">3D</div>
<!--TOOLBARICONS--><!--/TOOLBARICONS-->
<div class="a" style="left:377px;top:49px;width:1px;height:19px;background:#b0b0b0"></div><div class="a" style="left:454px;top:49px;width:1px;height:19px;background:#b0b0b0"></div><div class="a" style="left:457px;top:49px;width:1px;height:19px;background:#b0b0b0"></div><div class="a" style="left:531px;top:49px;width:1px;height:19px;background:#b0b0b0"></div>
<div class="a" style="left:461px;top:49px;width:21px;height:19px;background:#fff;border:1px solid #c8c8c8"></div><div class="a" style="left:483px;top:49px;width:21px;height:19px;background:#fff;border:1px solid #c8c8c8"></div>
<div class="a" style="left:544px;top:58px;width:74px;height:2px;background:#8c8c8c;border-bottom:1px solid #fff;height:3px"></div>
<svg class="a" style="left:616px;top:50px" width="12" height="21"><path d="M2.5 .5H9.5V16L5 20.5H2.5Z" fill="#f4f4f4" stroke="#777"/><path d="M9.5 .5V16L5 20.5" fill="none" stroke="#444"/></svg>
<svg class="a" style="left:278px;top:74px" width="811" height="628" font-family="Liberation Sans, sans-serif" font-size="10.5"><rect x="0.5" y="0.5" width="19" height="20" fill="#f0f0f0" stroke="#666"/><path d="M4 10.5H16M10.5 4V17M7.5 6V15M13.5 6V15" stroke="#aaa" stroke-dasharray="1.5 1" fill="none"/><path d="M20 .5H793M20 20.5H793" stroke="#666" fill="none"/><path d="M19.5 21V611" stroke="#666" fill="none"/><path d="M24.5 20V17.5M31.5 20V17.5M38.5 20V17.5M45.5 20V17.5M52.5 20V13M59.5 20V17.5M66.5 20V17.5M73.5 20V17.5M80.5 20V17.5M87.5 20V16M94.5 20V17.5M101.5 20V17.5M108.5 20V17.5M115.5 20V17.5M122.5 20V13M129.5 20V17.5M136.5 20V17.5M143.5 20V17.5M150.5 20V17.5M157.5 20V16M164.5 20V17.5M172.5 20V17.5M179.5 20V17.5M186.5 20V17.5M193.5 20V13M200.5 20V17.5M207.5 20V17.5M214.5 20V17.5M221.5 20V17.5M228.5 20V16M235.5 20V17.5M242.5 20V17.5M249.5 20V17.5M256.5 20V17.5M263.5 20V13M270.5 20V17.5M277.5 20V17.5M284.5 20V17.5M291.5 20V17.5M298.5 20V16M305.5 20V17.5M312.5 20V17.5M319.5 20V17.5M327.5 20V17.5M334.5 20V13M341.5 20V17.5M348.5 20V17.5M355.5 20V17.5M362.5 20V17.5M369.5 20V16M376.5 20V17.5M383.5 20V17.5M390.5 20V17.5M397.5 20V17.5M404.5 20V13M411.5 20V17.5M418.5 20V17.5M425.5 20V17.5M432.5 20V17.5M439.5 20V16M446.5 20V17.5M453.5 20V17.5M460.5 20V17.5M467.5 20V17.5M474.5 20V13M481.5 20V17.5M489.5 20V17.5M496.5 20V17.5M503.5 20V17.5M510.5 20V16M517.5 20V17.5M524.5 20V17.5M531.5 20V17.5M538.5 20V17.5M545.5 20V13M552.5 20V17.5M559.5 20V17.5M566.5 20V17.5M573.5 20V17.5M580.5 20V16M587.5 20V17.5M594.5 20V17.5M601.5 20V17.5M608.5 20V17.5M615.5 20V13M622.5 20V17.5M629.5 20V17.5M636.5 20V17.5M644.5 20V17.5M651.5 20V16M658.5 20V17.5M665.5 20V17.5M672.5 20V17.5M679.5 20V17.5M686.5 20V13M693.5 20V17.5M700.5 20V17.5M707.5 20V17.5M714.5 20V17.5M721.5 20V16M728.5 20V17.5M735.5 20V17.5M742.5 20V17.5M749.5 20V17.5M756.5 20V13M763.5 20V17.5M770.5 20V17.5M777.5 20V17.5M784.5 20V17.5M791.5 20V16" stroke="#000" fill="none"/><path d="M30.5 2V20" stroke="#000"/><text x="51.8" y="11.5" text-anchor="middle">-500</text><text x="122.2" y="11.5" text-anchor="middle">-400</text><text x="192.7" y="11.5" text-anchor="middle">-300</text><text x="263.1" y="11.5" text-anchor="middle">-200</text><text x="333.6" y="11.5" text-anchor="middle">-100</text><text x="404.0" y="11.5" text-anchor="middle">0</text><text x="474.4" y="11.5" text-anchor="middle">100</text><text x="544.9" y="11.5" text-anchor="middle">200</text><text x="615.4" y="11.5" text-anchor="middle">300</text><text x="685.8" y="11.5" text-anchor="middle">400</text><text x="791" y="11" text-anchor="end" font-size="8" font-family="DejaVu Sans, sans-serif">millimetres</text><path d="M19 605.5H16.5M19 598.5H12M19 591.5H16.5M19 584.5H16.5M19 577.5H16.5M19 570.5H16.5M19 563.5H15M19 556.5H16.5M19 548.5H16.5M19 541.5H16.5M19 534.5H16.5M19 527.5H12M19 520.5H16.5M19 513.5H16.5M19 506.5H16.5M19 499.5H16.5M19 492.5H15M19 485.5H16.5M19 478.5H16.5M19 471.5H16.5M19 464.5H16.5M19 457.5H12M19 450.5H16.5M19 443.5H16.5M19 436.5H16.5M19 429.5H16.5M19 422.5H15M19 415.5H16.5M19 408.5H16.5M19 401.5H16.5M19 393.5H16.5M19 386.5H12M19 379.5H16.5M19 372.5H16.5M19 365.5H16.5M19 358.5H16.5M19 351.5H15M19 344.5H16.5M19 337.5H16.5M19 330.5H16.5M19 323.5H16.5M19 316.5H12M19 309.5H16.5M19 302.5H16.5M19 295.5H16.5M19 288.5H16.5M19 281.5H15M19 274.5H16.5M19 267.5H16.5M19 260.5H16.5M19 253.5H16.5M19 246.5H12M19 239.5H16.5M19 231.5H16.5M19 224.5H16.5M19 217.5H16.5M19 210.5H15M19 203.5H16.5M19 196.5H16.5M19 189.5H16.5M19 182.5H16.5M19 175.5H12M19 168.5H16.5M19 161.5H16.5M19 154.5H16.5M19 147.5H16.5M19 140.5H15M19 133.5H16.5M19 126.5H16.5M19 119.5H16.5M19 112.5H16.5M19 105.5H12M19 98.5H16.5M19 91.5H16.5M19 84.5H16.5M19 76.5H16.5M19 69.5H15M19 62.5H16.5M19 55.5H16.5M19 48.5H16.5M19 41.5H16.5M19 34.5H12M19 27.5H16.5" stroke="#000" fill="none"/><path d="M2 31.5H19" stroke="#000"/><text transform="translate(10.5,597.8) rotate(-90)" text-anchor="middle">-400</text><text transform="translate(10.5,527.4) rotate(-90)" text-anchor="middle">-300</text><text transform="translate(10.5,456.9) rotate(-90)" text-anchor="middle">-200</text><text transform="translate(10.5,386.4) rotate(-90)" text-anchor="middle">-100</text><text transform="translate(10.5,316.0) rotate(-90)" text-anchor="middle">0</text><text transform="translate(10.5,245.6) rotate(-90)" text-anchor="middle">100</text><text transform="translate(10.5,175.1) rotate(-90)" text-anchor="middle">200</text><text transform="translate(10.5,104.7) rotate(-90)" text-anchor="middle">300</text><text transform="translate(10.5,34.2) rotate(-90)" text-anchor="middle">400</text><rect x="793.5" y=".5" width="17" height="20" fill="#f4f4f4" stroke="#888"/><path d="M794 20.5H811M810.5 1V21" stroke="#555" fill="none"/><path d="M797 11H807L802 16Z" fill="#000"/><path d="M797 8H807" stroke="#000" stroke-width="1.5" stroke-dasharray="4 2"/><rect x=".5" y="611.5" width="18" height="16" fill="#f4f4f4" stroke="#aaa"/><path d="M0 627.5H19.5V611" stroke="#666" fill="none"/><path d="M9 615.5V623.5L14 619.5Z" fill="#000"/><path d="M6 615V624" stroke="#000" stroke-width="1.5" stroke-dasharray="3 2"/></svg>
<div class="a" style="left:1072px;top:112px;width:15px;height:556px;background:#cdcdcd"></div>
<svg class="a" style="left:1072px;top:95px" width="16" height="592"><path d="M3 11.5L7.5 7L12 11.5" fill="none" stroke="#505050" stroke-width="2"/><path d="M3 581L7.5 585.5L12 581" fill="none" stroke="#505050" stroke-width="2"/></svg>
<div class="a" style="left:315px;top:686px;width:738px;height:15px;background:#cdcdcd"></div>
<svg class="a" style="left:298px;top:686px" width="774" height="16"><path d="M10.5 3L6 7.5L10.5 12" fill="none" stroke="#505050" stroke-width="2"/><path d="M762 3L766.500 7.5L762 12" fill="none" stroke="#505050" stroke-width="2"/></svg>
<div class="a" style="left:506px;top:108px;width:354px;height:564px;background:#ffff80;border:1px solid #000"></div>
<!--TBI--><svg class="a" style="left:300px;top:44px" width="240" height="30" viewBox="300 44 240 30"><path d="M319.6 61.5L322.1 63.3" stroke="#d4a474" stroke-width="3.800" stroke-linecap="round"/><circle cx="314.6" cy="57" r="6.300" fill="#d8e8f4" stroke="#7c90a8" stroke-width="1.500"/><path d="M310.600 57H318.600M314.600 53V61" stroke="#305478" stroke-width="1.700"/><path d="M342.4 61.5L344.9 63.3" stroke="#d4a474" stroke-width="3.800" stroke-linecap="round"/><circle cx="337.4" cy="57" r="6.300" fill="#d8e8f4" stroke="#7c90a8" stroke-width="1.500"/><path d="M333.400 57H341.400" stroke="#305478" stroke-width="1.700"/><path d="M365.6 61.5L368.1 63.3" stroke="#d4a474" stroke-width="3.800" stroke-linecap="round"/><circle cx="360.6" cy="57" r="6.300" fill="#d8e8f4" stroke="#7c90a8" stroke-width="1.500"/><path d="M358 59.500C356 55 360 52 363.500 54.500C365.500 56.500 364 60 361.500 60.500" stroke="#a0b020" stroke-width="1.800" fill="none"/><path d="M355.500 56.500L360.500 57L357 61Z" fill="#a0b020"/><path d="M396.4 61.5L398.9 63.3" stroke="#d4a474" stroke-width="3.800" stroke-linecap="round"/><circle cx="391.4" cy="57" r="6.300" fill="#d8e8f4" stroke="#7c90a8" stroke-width="1.500"/><text x="391.400" y="59.800" text-anchor="middle" font-family="Liberation Sans, sans-serif" font-weight="bold" font-size="7" fill="#486888">1:1</text><path d="M419 61.5L421.5 63.3" stroke="#d4a474" stroke-width="3.800" stroke-linecap="round"/><circle cx="414" cy="57" r="6.300" fill="#d8e8f4" stroke="#7c90a8" stroke-width="1.500"/><rect x="410.500" y="54" width="7" height="6" fill="#c0d4e8" stroke="#406080" stroke-width="1.300"/><path d="M432 55C431 50 437 48 440 50C445 49 447 54 445 57L447 63L443 62L441 64H436C432 63 430 59 432 55Z" fill="#a0a0a0"/><path d="M465 51.500H471M465 54.500H468M465 57.500H467M465 60.500H468M465 63.500H471" stroke="#000" stroke-width="1" stroke-dasharray="1.500 1"/><path d="M470 51V65" stroke="#000" stroke-width="1" stroke-dasharray="1.500 1"/><path d="M467 58L472.500 53V56H479V60.500H472.500V63.500Z" fill="#505050" stroke="#000" stroke-width=".9"/><path d="M495 51.500H501M498 54.500H501M499 57.500H501M498 60.500H501M495 63.500H501" stroke="#000" stroke-width="1" stroke-dasharray="1.500 1"/><path d="M496 51V65M501.500 51V65" stroke="#000" stroke-width="1" stroke-dasharray="1.500 1"/><path d="M498.500 58L493 53V56H486.500V60.500H493V63.500Z" fill="#505050" stroke="#000" stroke-width=".9"/><path d="M520 59L524 63" stroke="#d4a474" stroke-width="2.800" stroke-linecap="round"/><circle cx="517" cy="56.500" r="4.500" fill="#d8e4f4" stroke="#90a0c0" stroke-width="1.200"/><path d="M508 58L516 52.500V56H519V60.500H516V64Z" fill="#5c78d0"/></svg><!--/TBI-->
<!--RELIEF--><svg class="a" style="left:0;top:0" width="1366" height="768" viewBox="0 0 1366 768"><defs>
<filter id="rb2" x="-20%" y="-20%" width="140%" height="140%"><feGaussianBlur stdDeviation="2.5"/></filter>
<filter id="rb1" x="-20%" y="-20%" width="140%" height="140%"><feGaussianBlur stdDeviation="1.2"/></filter>
<filter id="rb4" x="-30%" y="-30%" width="160%" height="160%"><feGaussianBlur stdDeviation="5"/></filter>
<radialGradient id="lobe"><stop offset="0" stop-color="#c2c2c2"/><stop offset=".7" stop-color="#b0b0b0"/><stop offset="1" stop-color="#949494"/></radialGradient>
<radialGradient id="lobe2"><stop offset="0" stop-color="#a8a8a8"/><stop offset=".7" stop-color="#9c9c9c"/><stop offset="1" stop-color="#8f8f8f"/></radialGradient>
<radialGradient id="orn"><stop offset="0" stop-color="#828282"/><stop offset="1" stop-color="#6a6a6a"/></radialGradient>
<radialGradient id="belly" cx=".5" cy=".6" r=".56"><stop offset="0" stop-color="#b8b8b8"/><stop offset=".45" stop-color="#a6a6a6"/><stop offset=".75" stop-color="#8c8c8c"/><stop offset="1" stop-color="#686868"/></radialGradient>
<linearGradient id="ped" x1="0" y1="0" x2="0" y2="1"><stop offset="0" stop-color="#f6f6f6"/><stop offset=".3" stop-color="#ececec"/><stop offset=".7" stop-color="#dadada"/><stop offset="1" stop-color="#c6c6c6"/></linearGradient>
<linearGradient id="strip" x1="0" y1="0" x2="0" y2="1"><stop offset="0" stop-color="#686868"/><stop offset=".45" stop-color="#868686"/><stop offset="1" stop-color="#8e8e8e"/></linearGradient>
<linearGradient id="pedx" x1="0" y1="0" x2="1" y2="0"><stop offset="0" stop-color="#000" stop-opacity=".22"/><stop offset=".3" stop-color="#000" stop-opacity="0"/><stop offset=".7" stop-color="#000" stop-opacity="0"/><stop offset="1" stop-color="#000" stop-opacity=".22"/></linearGradient>
<linearGradient id="bellx" x1="0" y1="0" x2="1" y2="0"><stop offset="0" stop-color="#000" stop-opacity=".36"/><stop offset=".1" stop-color="#000" stop-opacity=".2"/><stop offset=".24" stop-color="#000" stop-opacity="0"/><stop offset=".76" stop-color="#000" stop-opacity="0"/><stop offset=".9" stop-color="#000" stop-opacity=".2"/><stop offset="1" stop-color="#000" stop-opacity=".36"/></linearGradient>
<linearGradient id="panel" x1="0" y1="0" x2="0" y2="1"><stop offset="0" stop-color="#666"/><stop offset=".7" stop-color="#5c5c5c"/><stop offset="1" stop-color="#484848"/></linearGradient>
<clipPath id="artclip"><rect x="507" y="109" width="352" height="562"/></clipPath>
</defs><g clip-path="url(#artclip)"><g id="half"><path d="M566.6 315.3A119 119 0 0 1 642.3 228.2" stroke="#6b6b6b" stroke-width="16" fill="none"/><circle cx="559.2" cy="302.1" r="9.5" fill="#6d6d6d"/><circle cx="563.9" cy="289.1" r="9.5" fill="#6d6d6d"/><circle cx="570.0" cy="276.7" r="9.5" fill="#6d6d6d"/><circle cx="577.4" cy="265.0" r="9.5" fill="#6d6d6d"/><circle cx="586.0" cy="254.2" r="9.5" fill="#6d6d6d"/><circle cx="595.7" cy="244.3" r="9.5" fill="#6d6d6d"/><circle cx="606.4" cy="235.6" r="9.5" fill="#6d6d6d"/><circle cx="618.0" cy="228.0" r="9.5" fill="#6d6d6d"/><circle cx="630.3" cy="221.7" r="9.5" fill="#6d6d6d"/><ellipse cx="562.1" cy="299.5" rx="3.8" ry="2.6" transform="rotate(-17.0 562.1 299.5)" fill="#ffff80"/><ellipse cx="572.7" cy="296.8" rx="3.3" ry="2.2" transform="rotate(23.0 572.7 296.8)" fill="#ffff80"/><circle cx="552.9" cy="292.4" r="3.2" fill="#ffff80"/><circle cx="564.2" cy="306.4" r="1.8" fill="#ffff80"/><ellipse cx="565.7" cy="286.2" rx="3.8" ry="2.6" transform="rotate(6.875 565.7 286.2)" fill="#ffff80"/><ellipse cx="576.6" cy="284.5" rx="3.3" ry="2.2" transform="rotate(16.875 576.6 284.5)" fill="#ffff80"/><circle cx="558.8" cy="278.8" r="3.2" fill="#ffff80"/><circle cx="568.4" cy="293.9" r="1.8" fill="#ffff80"/><ellipse cx="570.8" cy="273.3" rx="3.8" ry="2.6" transform="rotate(-29.25 570.8 273.3)" fill="#ffff80"/><ellipse cx="584.4" cy="274.3" rx="3.3" ry="2.2" transform="rotate(10.75 584.4 274.3)" fill="#ffff80"/><circle cx="566.0" cy="265.9" r="3.2" fill="#ffff80"/><circle cx="574.0" cy="281.9" r="1.8" fill="#ffff80"/><ellipse cx="581.0" cy="263.5" rx="3.8" ry="2.6" transform="rotate(-5.375 581.0 263.5)" fill="#ffff80"/><ellipse cx="590.8" cy="263.2" rx="3.3" ry="2.2" transform="rotate(4.625 590.8 263.2)" fill="#ffff80"/><circle cx="574.6" cy="253.8" r="3.2" fill="#ffff80"/><circle cx="580.8" cy="270.6" r="1.8" fill="#ffff80"/><ellipse cx="588.7" cy="252.0" rx="3.8" ry="2.6" transform="rotate(-41.5 588.7 252.0)" fill="#ffff80"/><ellipse cx="600.5" cy="254.9" rx="3.3" ry="2.2" transform="rotate(-1.5 600.5 254.9)" fill="#ffff80"/><circle cx="584.4" cy="242.8" r="3.2" fill="#ffff80"/><circle cx="588.8" cy="260.1" r="1.8" fill="#ffff80"/><ellipse cx="597.6" cy="241.3" rx="3.8" ry="2.6" transform="rotate(-17.625 597.6 241.3)" fill="#ffff80"/><ellipse cx="609.2" cy="245.4" rx="3.3" ry="2.2" transform="rotate(-7.625 609.2 245.4)" fill="#ffff80"/><circle cx="595.3" cy="232.8" r="3.2" fill="#ffff80"/><circle cx="597.9" cy="250.5" r="1.8" fill="#ffff80"/><ellipse cx="610.3" cy="235.2" rx="3.8" ry="2.6" transform="rotate(-53.75 610.3 235.2)" fill="#ffff80"/><ellipse cx="620.5" cy="239.3" rx="3.3" ry="2.2" transform="rotate(-13.75 620.5 239.3)" fill="#ffff80"/><circle cx="607.3" cy="224.0" r="3.2" fill="#ffff80"/><circle cx="607.9" cy="242.0" r="1.8" fill="#ffff80"/><ellipse cx="621.2" cy="226.8" rx="3.8" ry="2.6" transform="rotate(-29.875 621.2 226.8)" fill="#ffff80"/><ellipse cx="630.9" cy="231.9" rx="3.3" ry="2.2" transform="rotate(-19.875 630.9 231.9)" fill="#ffff80"/><circle cx="620.1" cy="216.6" r="3.2" fill="#ffff80"/><circle cx="618.8" cy="234.5" r="1.8" fill="#ffff80"/><ellipse cx="633.1" cy="219.4" rx="3.8" ry="2.6" transform="rotate(-66.0 633.1 219.4)" fill="#ffff80"/><ellipse cx="643.2" cy="228.4" rx="3.3" ry="2.2" transform="rotate(-26.0 643.2 228.4)" fill="#ffff80"/><circle cx="633.6" cy="210.6" r="3.2" fill="#ffff80"/><circle cx="630.4" cy="228.3" r="1.8" fill="#ffff80"/><path d="M582.6 334.7A100.5 100.5 0 0 1 645.4 246.8" stroke="#6a6a6a" stroke-width="23" fill="none"/><path d="M582.1 334.7A101 101 0 0 1 645.2 246.4" stroke="#7c7c7c" stroke-width="12" fill="none" filter="url(#rb2)"/><circle cx="641" cy="209" r="10.5" fill="#686868"/><ellipse cx="567" cy="313" rx="7.500" ry="16" transform="rotate(14 567 313)" fill="#747474"/><circle cx="555.800" cy="291.500" r="5" fill="#6d6d6d"/><circle cx="546.500" cy="296" r="3.200" fill="#6d6d6d"/><path d="M540 313C546 310 558 310 564 314C564 320 560 326 558 330C562 338 562 346 556 352L558 367H540C534 358 533 346 534 336C535 326 537 318 540 313Z" fill="#808080"/><circle cx="546.500" cy="306.500" r="6.800" fill="#808080"/><path d="M553 331L575 334" stroke="#808080" stroke-width="5.500"/><rect x="537" y="365" width="15" height="8" fill="#838383"/><path d="M534 332C530 340 531 350 535 356" stroke="#8a8a8a" stroke-width="2" fill="none" stroke-dasharray="2 1.500"/><path d="M582 300C586 300 589 303 589 305L599 310L590 314C591 320 592 326 593 332C600 338 602 350 597 358C594 364 588 367 580 367L556 367C548 364 542 358 539 352C548 352 560 346 570 340C575 334 575 322 575 312C575 304 578 300 582 300Z" fill="#909090"/><rect x="566.500" y="366" width="5.500" height="7.500" fill="#8a8a8a"/><rect x="581" y="366" width="5.500" height="7.500" fill="#8a8a8a"/><path d="M599 336C604 344 604 356 598 362" stroke="#8a8a8a" stroke-width="2.200" fill="none"/><rect x="537" y="372" width="64" height="15" fill="#868686"/><rect x="545" y="387" width="56" height="8" fill="#7e7e7e"/><rect x="541" y="393" width="60" height="9" rx="4" fill="#898989"/><rect x="553" y="402" width="48" height="8" fill="#7c7c7c"/><rect x="541" y="408" width="60" height="9" rx="4" fill="#898989"/><rect x="555" y="417" width="46" height="10" fill="#808080"/><path d="M548 427H586V448H562C552 444 548 436 548 427Z" fill="#858585"/><path d="M552 452C560 446 574 446 580 452L586 448V534H556L548 530C538 530 536 518 544 514C552 512 556 518 556 522L560 512C552 500 546 486 544 472C540 470 540 464 544 462C546 458 548 454 552 452Z" fill="#838383"/><path d="M551 470L557 464L556 472ZM549 480C551 490 554 496 558 500L555 488ZM562 506L568 516L566 528L560 520ZM573 510L578 520L570 532L568 526ZM580 458H586V466L580 464ZM580 470C584 472 586 478 584 482C580 484 578 478 580 470ZM582 492L586 490V530H583Z" fill="#ffff80"/><rect x="548" y="533" width="38" height="6" fill="#7c7c7c"/><rect x="539" y="538" width="47" height="33" rx="3" fill="#868686"/><rect x="541" y="551" width="45" height="4" fill="#7e7e7e"/><path d="M534 581L545 572H586V590H545Z" fill="#8a8a8a"/><rect x="544" y="590" width="42" height="13" fill="#747474"/><path d="M515 618C518 608 532 603 540 602H600V639H515Z" fill="#858585"/><rect x="585" y="372" width="15.500" height="267" fill="#8a8a8a"/><rect x="585" y="372" width="2" height="230" fill="#7c7c7c"/></g><use href="#half" transform="translate(1366 0) scale(-1 1)"/><path d="M600 364L612 350H628L640 359L650 370L658 364H708L716 370L726 359L738 350H754L766 364V584L746 582L714 588L706 592H660L652 588L620 582L600 584Z" fill="url(#panel)"/><path d="M609 380H619V590C619 598 616 600 614 600C611 600 609 596 609 590Z" fill="#565656"/><path d="M757 380H747V590C747 598 750 600 752 600C755 600 757 596 757 590Z" fill="#565656"/><rect x="600" y="372" width="9" height="190" fill="#666"/><rect x="757" y="372" width="9" height="190" fill="#666"/><rect x="600" y="505" width="9" height="123" fill="url(#strip)"/><rect x="757" y="505" width="9" height="123" fill="url(#strip)"/><circle cx="604" cy="630" r="7" fill="#a4a4a4"/><circle cx="762" cy="630" r="7" fill="#a4a4a4"/><path d="M605.5 378V368Q606 360 612 355Q622 347 634 340Q652 331 663 322Q671 315 678 304" stroke="#727272" stroke-width="11" fill="none"/><path d="M760.5 378V368Q760 360 754 355Q744 347 732 340Q714 331 703 322Q695 315 688 304" stroke="#727272" stroke-width="11" fill="none"/><path d="M683 285.500C680.500 289 679 296 671 303L683 316L695 303C687 296 685.500 289 683 285.500Z" fill="#727272"/><circle cx="621" cy="368" r="12.5" fill="url(#orn)"/><circle cx="745" cy="368" r="12.5" fill="url(#orn)"/><rect x="618" y="380" width="6" height="30" fill="#6c6c6c"/><rect x="742" y="380" width="6" height="30" fill="#6c6c6c"/><clipPath id="aurclip"><rect x="640" y="296" width="86" height="68"/></clipPath><path d="M683 310L660 328H706Z" fill="#2a2a2a"/><path clip-path="url(#aurclip)" d="M716.0 346.0L711.6 350.5L714.4 356.2L708.8 359.2L709.7 365.4L703.5 366.5L702.4 372.7L696.2 371.8L693.2 377.4L687.5 374.6L683.0 379.0L678.5 374.6L672.8 377.4L669.8 371.8L663.6 372.7L662.5 366.5L656.3 365.4L657.2 359.2L651.6 356.2L654.4 350.5L650.0 346.0L654.4 341.5L651.6 335.8L657.2 332.8L656.3 326.6L662.5 325.5L663.6 319.3L669.8 320.2L672.8 314.6L678.5 317.4L683.0 313.0L687.5 317.4L693.2 314.6L696.2 320.2L702.4 319.3L703.5 325.5L709.7 326.6L708.8 332.8L714.4 335.8L711.6 341.5Z" fill="#2a2a2a"/><ellipse cx="661" cy="352" rx="6" ry="15" fill="#8a8a8a"/><ellipse cx="705" cy="352" rx="6" ry="15" fill="#8a8a8a"/><path d="M683 312C690 316 697 326 700 342V352H666V342C669 326 676 316 683 312Z" fill="#8c8c8c"/><path d="M668 372C660 380 646 382 640 388C634 394 634 404 636 420L640 470H726L730 420C732 404 732 394 726 388C720 382 706 380 698 372Z" fill="#979797"/><ellipse cx="683" cy="361" rx="15.500" ry="19" fill="#9a9a9a"/><ellipse cx="683" cy="366" rx="9" ry="10" fill="#a2a2a2" filter="url(#rb1)"/><path d="M634 430C634 420 640 416 650 416H716C726 416 732 420 732 430C746 455 752 485 749 512C745 545 722 569 683 571C644 569 621 545 617 512C614 485 620 455 634 430Z" fill="url(#belly)"/><path d="M634 430C634 420 640 416 650 416H716C726 416 732 420 732 430C746 455 752 485 749 512C745 545 722 569 683 571C644 569 621 545 617 512C614 485 620 455 634 430Z" fill="url(#bellx)"/><g fill="none" stroke="#8c8c8c" stroke-opacity=".55" stroke-width="1.500"><path d="M624 488C640 520 726 520 742 488"/><path d="M620 505C640 545 726 545 746 505"/><path d="M626 528C650 562 716 562 740 528"/><path d="M640 548C660 570 706 570 726 548"/></g><rect x="635" y="398" width="21" height="30" rx="3" fill="#828282"/><rect x="633" y="398" width="25" height="7" rx="3" fill="#8c8c8c"/><rect x="710" y="398" width="21" height="82" rx="5" fill="#9a9a9a"/><rect x="708" y="398" width="25" height="7" rx="3" fill="#8c8c8c"/><path d="M656 392H710V480C710 492 698 498 683 498C668 498 656 492 656 480Z" fill="#a2a2a2"/><path d="M666 400H700V470C700 484 692 490 683 490C674 490 666 484 666 470Z" fill="#a8a8a8" filter="url(#rb1)"/><ellipse cx="705" cy="486" rx="18" ry="9" transform="rotate(-14 705 486)" fill="#cdcdcd"/><path d="M636 432C636 424 642 423 646 423C652 423 656 426 656 432V458L652 462L649 460L646 466L642 460L638 462L634 452Z" fill="#f3f3f3"/><path d="M661 569H705V583L709 592H657L661 583Z" fill="#cdcdcd"/><rect x="661" y="569" width="44" height="3" fill="#dcdcdc"/><rect x="679" y="574" width="8" height="17" fill="#484848"/><path d="M650 591H716Q722 612 737 628V633H629V628Q644 612 650 591Z" fill="url(#ped)"/><path d="M650 591H716Q722 612 737 628V633H629V628Q644 612 650 591Z" fill="url(#pedx)"/><path d="M683 138.3L677 140.5L672 143.5L671 147.7L665.7 148.75L664.7 157L661.5 161L664.7 168.5L660 175L706 175L701.3 168.5L704.5 161L701.3 157L700.3 148.75L695 147.7L694 143.5L689 140.5L683 138.3Z" fill="#8f8f8f"/><path d="M683 165L664 167.5L657 170L650 168.5L648 174.8L651 182L647 192.5L649 197.7L646 206L642.8 213L643.8 226L648 230L639.7 238L642.8 248.75L647 255L649 266L655 276L660.5 273.75L665 267L670 263L676 266L683 268L683 268L690 266L696 263L701 267L705.5 273.75L711 276L717 266L719 255L723.2 248.75L726.3 238L718 230L722.2 226L723.2 213L720 206L717 197.7L719 192.5L715 182L718 174.8L716 168.5L709 170L702 167.5L683 165Z" fill="#8f8f8f" stroke="#8f8f8f" stroke-width="2" stroke-linejoin="round"/><path d="M647 258C641 262 643 274 650 277C655 278 657 272 654 269" stroke="#727272" stroke-width="3.500" fill="none"/><path d="M719 258C725 262 723 274 716 277C711 278 709 272 712 269" stroke="#727272" stroke-width="3.500" fill="none"/><ellipse cx="683" cy="160" rx="10" ry="15" fill="url(#lobe2)"/><ellipse cx="667" cy="188" rx="11.5" ry="12.5" fill="url(#lobe)"/><ellipse cx="699" cy="188" rx="11.5" ry="12.5" fill="url(#lobe)"/><ellipse cx="683" cy="207" rx="12" ry="10" fill="url(#lobe2)"/><ellipse cx="656" cy="220" rx="13.5" ry="17" fill="url(#lobe)"/><ellipse cx="710" cy="220" rx="13.5" ry="17" fill="url(#lobe)"/><ellipse cx="661" cy="254" rx="8.5" ry="17" fill="url(#lobe2)"/><ellipse cx="705" cy="254" rx="8.5" ry="17" fill="url(#lobe2)"/><ellipse cx="683" cy="249" rx="10.5" ry="18" fill="url(#lobe2)"/><ellipse cx="683" cy="229" rx="4.500" ry="3.500" fill="#b0b0b0"/><ellipse cx="683" cy="229.500" rx="2.200" ry="1.500" fill="#808080"/></g></svg><!--/RELIEF-->
<div class="a" style="left:277px;top:706px;width:813px;height:1px;background:#a0a0a0"></div><div class="a" style="left:277px;top:707px;width:813px;height:1px;background:#fff"></div>
<div class="a" style="left:298px;top:723px;width:25px;height:20px;background:#000"></div><div class="a" style="left:283px;top:711px;width:26px;height:20px;background:#fff;border:1px solid #000;box-shadow:1px 1px 0 #888"></div>
<svg class="a" style="left:311px;top:711px" width="13" height="10"><rect x=".7" y=".7" width="7" height="5" rx="2.5" fill="none" stroke="#000" stroke-width="1.400"/><rect x="4.500" y="3.500" width="7" height="5" rx="2.5" fill="none" stroke="#000" stroke-width="1.400"/></svg>
<div class="a" style="left:333px;top:712px;width:30px;height:30px;background:#fff;border:1px solid #222"></div><div class="a" style="left:368px;top:712px;width:30px;height:30px;background:#000;border:1px solid #222"></div><div class="a" style="left:403px;top:712px;width:30px;height:30px;background:#00ffff;border:1px solid #222"></div><div class="a" style="left:438px;top:712px;width:30px;height:30px;background:#3540e0;border:1px solid #222"></div><div class="a" style="left:473px;top:712px;width:30px;height:30px;background:#5cb84c;border:1px solid #222"></div><div class="a" style="left:508px;top:712px;width:30px;height:30px;background:#d81020;border:1px solid #222"></div><div class="a" style="left:543px;top:712px;width:30px;height:30px;background:#a030e0;border:1px solid #222"></div><div class="a" style="left:578px;top:712px;width:30px;height:30px;background:#ffff80;border:1px solid #222"></div><div class="a" style="left:613px;top:712px;width:30px;height:30px;background:#aca030;border:1px solid #222"></div><div class="a" style="left:648px;top:712px;width:30px;height:30px;background:#ffc814;border:1px solid #222"></div><div class="a" style="left:683px;top:712px;width:30px;height:30px;background:#000;border:1px solid #222"></div><div class="a" style="left:718px;top:712px;width:30px;height:30px;background:#000;border:1px solid #222"></div><div class="a" style="left:753px;top:712px;width:30px;height:30px;background:#000;border:1px solid #222"></div><div class="a" style="left:788px;top:712px;width:30px;height:30px;background:#000;border:1px solid #222"></div><div class="a" style="left:823px;top:712px;width:30px;height:30px;background:#000;border:1px solid #222"></div><div class="a" style="left:858px;top:712px;width:30px;height:30px;background:#000;border:1px solid #222"></div><div class="a" style="left:893px;top:712px;width:30px;height:30px;background:#000;border:1px solid #222"></div><div class="a" style="left:928px;top:712px;width:30px;height:30px;background:#000;border:1px solid #222"></div><div class="a" style="left:963px;top:712px;width:30px;height:30px;background:#000;border:1px solid #222"></div><div class="a" style="left:998px;top:712px;width:30px;height:30px;background:#000;border:1px solid #222"></div><div class="a" style="left:1033px;top:712px;width:30px;height:30px;background:#000;border:1px solid #222"></div>
<svg class="a" style="left:1072px;top:708px" width="16" height="38"><path d="M3 10L7.5 5.5L12 10" fill="none" stroke="#505050" stroke-width="2"/><path d="M3 28L7.5 32.500L12 28" fill="none" stroke="#505050" stroke-width="2"/></svg>
<!--RIGHT-->
<div class="a" style="left:1093px;top:44px;width:1px;height:704px;background:#a0a0a0"></div><div class="a" style="left:1094px;top:44px;width:1px;height:704px;background:#fff"></div>
<div class="a hdrR" style="top:45px">Vectors</div><div class="a colbtn" style="left:1328px;top:46px;background:#d8d8d8"><svg width="10" height="10" style="position:absolute;left:0;top:0"><path d="M5 8.5L8.5 1.5H1.5Z" fill="#444"/></svg></div>
<div class="a hdrR" style="top:76px">Bitmaps</div><div class="a colbtn" style="left:1328px;top:77px;background:#d8d8d8"><svg width="10" height="10" style="position:absolute;left:0;top:0"><path d="M5 1.5L8.5 8.5H1.5Z" fill="#444"/></svg></div>
<!--BMPICONS-->
<div class="a" style="left:1102px;top:118px;width:243px;height:23px;background:#d9d9d9"></div><div class="a t" style="left:1128px;top:123px;font-size:12.2px">Bitmap Layer 1</div>
<div class="a hdrR" style="top:157px">Reliefs</div><div class="a colbtn" style="left:1328px;top:158px;background:#d8d8d8"><svg width="10" height="10" style="position:absolute;left:0;top:0"><path d="M5 1.5L8.5 8.5H1.5Z" fill="#444"/></svg></div>
<div class="a" style="left:1103px;top:174px;width:240px;height:22px;background:#fff;border:1px solid;border-color:#777 #ddd #ddd #777;box-shadow:inset 1px 1px 0 #aaa"></div><div class="a t" style="left:1105px;top:176px;font-size:12.2px">Front Relief</div>
<div class="a" style="left:1325px;top:176px;width:16px;height:18px;background:#f0f0f0;border:1px solid;border-color:#fff #555 #555 #fff"></div><svg class="a" style="left:1325px;top:176px" width="16" height="18"><path d="M4.500 8H11.5L8 12Z" fill="#000"/></svg>
<!--RELICONS--><!--/RELICONS-->
<div class="a" style="left:1102px;top:224px;width:243px;height:25px;background:#d9d9d9"></div><div class="a t" style="left:1149px;top:231px;font-size:12.2px">Relief Layer 1</div>
<svg class="a" style="left:1137px;top:232px" width="8" height="10"><path d="M1.5 1L6 5L1.5 9Z" fill="#000"/></svg>
<div class="a" style="left:1312px;top:253px;width:12px;height:12px;background:linear-gradient(#3870c8,#0c3484);border:1px solid #0c3070"></div><div class="a" style="left:1330px;top:253px;width:12px;height:12px;background:linear-gradient(#3870c8,#0c3484);border:1px solid #0c3070"></div>
<svg class="a" style="left:1313px;top:253px" width="28" height="11"><path d="M5.5 9V2.5M2.5 5.5L5.5 2.500L8.5 5.5" stroke="#fff" stroke-width="1.5" fill="none"/><path d="M22.5 2V8.500M19.5 5.5L22.5 8.500L25.5 5.5" stroke="#fff" stroke-width="1.5" fill="none"/></svg>
<div class="a" style="left:1095px;top:720px;width:270px;height:1px;background:#a0a0a0"></div><div class="a" style="left:1364px;top:44px;width:1px;height:677px;background:#a0a0a0"></div>
<svg class="a" style="left:1095px;top:721px" width="271" height="27"><rect width="271" height="26" filter="url(#nz)"/><rect y="26" width="271" height="1" fill="#a0a0a0"/><path d="M0 0H48V19Q48 25 42 25H0Z" fill="#f3f3f3"/><path d="M48.500 25V6Q48.500 .5 54 .5H96.500V19Q96.500 25 91 25Z" fill="#f3f3f3" stroke="#b4b4b4"/><path d="M0 25.500H44Q48.500 25 48.500 20" fill="none" stroke="#b8b8b8"/></svg>
<div class="a" style="left:1102px;top:726px;font-size:12.5px;white-space:nowrap;letter-spacing:-.2px">Layers</div><div class="a" style="left:1151px;top:726.500px;font-size:12.5px;white-space:nowrap;letter-spacing:-.1px">Add In</div>
<!--RI--><svg class="a" style="left:1098px;top:92px" width="250" height="160" viewBox="1098 92 250 160"><defs>
<linearGradient id="rgdoc" x1="0" y1="0" x2=".6" y2="1"><stop offset="0" stop-color="#dce4f0"/><stop offset="1" stop-color="#7088aa"/></linearGradient>
<linearGradient id="rglab" x1="0" y1="0" x2="0" y2="1"><stop offset="0" stop-color="#e8e8e8"/><stop offset="1" stop-color="#a8a8a8"/></linearGradient>
<linearGradient id="rgsq" x1="0" y1="0" x2="1" y2="1"><stop offset="0" stop-color="#909090"/><stop offset="1" stop-color="#f4f4f4"/></linearGradient>
<linearGradient id="rgmona" x1="0" y1="0" x2="0" y2="1"><stop offset="0" stop-color="#b0b070"/><stop offset=".5" stop-color="#6a6030"/><stop offset="1" stop-color="#2a2010"/></linearGradient>
<radialGradient id="rgbulb" cx=".4" cy=".35" r=".7"><stop offset="0" stop-color="#fffce0"/><stop offset=".5" stop-color="#ffe040"/><stop offset="1" stop-color="#e8a800"/></radialGradient>
<linearGradient id="rgbtn" x1="0" y1="0" x2="0" y2="1"><stop offset="0" stop-color="#3870c8"/><stop offset="1" stop-color="#0c3484"/></linearGradient>
<filter id="rib" x="-30%" y="-30%" width="160%" height="160%"><feGaussianBlur stdDeviation=".7"/></filter>
</defs><g transform="translate(1103.5 96.5) scale(1)"><path d="M9 14L14 10.500V14Z" fill="#b4b4b4" filter="url(#rib)"/><path d="M0 1H5L9 5V14.500H0Z" fill="url(#rgdoc)"/><path d="M5 1V5H9Z" fill="#f2f5fa"/></g><g transform="translate(1134.5 97.5) scale(1)"><path d="M1 2L2 .5H6L7.500 2H12V6H1Z" fill="#f0d800"/><path d="M0 5.500C4 4 11 3.500 16 5L13 12L1.500 12.500Z" fill="#ffee10"/><path d="M1.500 12.500L13 12L16 5C13 8 6 8.500 1.500 12.500Z" fill="#d8c000"/></g><g transform="translate(1165.5 97.5) scale(1)"><path d="M12.500 12.500L17 9V12.500Z" fill="#b4b4b4" filter="url(#rib)"/><rect x="0" y="0" width="13" height="12.500" fill="#1a4cc0"/><rect x="2.500" y=".5" width="8" height="5.500" fill="url(#rglab)"/><rect x="3" y="8" width="7" height="4.500" fill="#c4c8d0"/><rect x="4" y="9" width="2.200" height="3" fill="#1a4cc0"/></g><g transform="translate(1198 96.5) scale(1)"><path d="M10 14L15.500 11V14.500Z" fill="#b8b8b8" filter="url(#rib)"/><path d="M1 0L3 1L5 0L7 1L9 0L10 4L12 8L13 14H2L1 11L2 8L0 5L1.500 2.500Z" fill="#c8a478"/><path d="M3 3L8 4M3 6L9 7M4 9L10 10M4 12H11" stroke="#a88458" stroke-width=".7"/></g><g transform="translate(1230 97) scale(1)"><path d="M13 13L16 9V13.500Z" fill="#b0b0b0" filter="url(#rib)"/><rect x="0" y="0" width="13.500" height="13.500" fill="url(#rgsq)"/></g><g transform="translate(1261 97) scale(1)"><path d="M5 8H14L17 14H8Z" fill="#7078c8" stroke="#4850a0" stroke-width=".5"/><rect x="0" y="0" width="9.500" height="11" fill="url(#rgmona)"/><path d="M1.500 11C1.500 7 3 6 3 4C3 1.500 7 1.500 7 4C7 6 8.500 7 8.500 11Z" fill="#241808"/><ellipse cx="5" cy="4" rx="1.600" ry="2.100" fill="#dcb068"/><path d="M3.500 7C4.500 6.300 5.500 6.300 6.500 7L6 9H4Z" fill="#c89448"/></g><g transform="translate(1294.5 97.5) scale(1)"><path d="M1 3H10L9 12C7 13 4 13 2 12Z" fill="#4888e0"/><ellipse cx="5.500" cy="3" rx="5" ry="2" fill="#88b8f0" stroke="#3870c8" stroke-width=".6"/><ellipse cx="5.500" cy="3" rx="3" ry="1" fill="#d0e4fc"/></g><rect x="1322.5" y="94.5" width="18" height="17.5" fill="#f6f6f6"/><path d="M1323.0 112.0V95.0H1340.5" stroke="#909090" fill="none"/><path d="M1323.0 111.5H1340.0V95.0" stroke="#fff" fill="none"/><rect x="1326.2" y="106.3" width="3.600" height="3.500" fill="#402008"/><circle cx="1328" cy="103" r="4.3" fill="url(#rgbulb)"/><rect x="1332.7" y="104.1" width="3.600" height="3.500" fill="#402008"/><circle cx="1334.5" cy="100.5" r="4.6" fill="url(#rgbulb)"/><g transform="translate(1105.5 120.5) scale(1)"><rect x="0" y="0" width="16.500" height="16.500" fill="#e8d880"/><rect x="0" y="0" width="16.500" height="9" fill="#b8b468"/><path d="M1 16.500C1 11 4 10 4 6C4 1.500 12.500 1.500 12.500 6C12.500 10 15.500 11 15.500 16.500Z" fill="#241808"/><ellipse cx="8.200" cy="6" rx="2.700" ry="3.500" fill="#dcb068"/><path d="M5.500 11C7 10 9.500 10 11 11L10 14.500H6.500Z" fill="#c89448"/></g><g transform="translate(1103.5 202.5) scale(1.08)"><path d="M9 14L14 10.500V14Z" fill="#b4b4b4" filter="url(#rib)"/><path d="M0 1H5L9 5V14.500H0Z" fill="url(#rgdoc)"/><path d="M5 1V5H9Z" fill="#f2f5fa"/></g><g transform="translate(1130 203.5) scale(1)"><path d="M1 2L2 .5H6L7.500 2H12V6H1Z" fill="#f0d800"/><path d="M0 5.500C4 4 11 3.500 16 5L13 12L1.500 12.500Z" fill="#ffee10"/><path d="M1.500 12.500L13 12L16 5C13 8 6 8.500 1.500 12.500Z" fill="#d8c000"/></g><g transform="translate(1157.5 203.5) scale(1)"><path d="M12.500 12.500L17 9V12.500Z" fill="#b4b4b4" filter="url(#rib)"/><rect x="0" y="0" width="13" height="12.500" fill="#1a4cc0"/><rect x="2.500" y=".5" width="8" height="5.500" fill="url(#rglab)"/><rect x="3" y="8" width="7" height="4.500" fill="#c4c8d0"/><rect x="4" y="9" width="2.200" height="3" fill="#1a4cc0"/></g><g transform="translate(1186 202.5) scale(1)"><path d="M10 14L15.500 11V14.500Z" fill="#b8b8b8" filter="url(#rib)"/><path d="M1 0L3 1L5 0L7 1L9 0L10 4L12 8L13 14H2L1 11L2 8L0 5L1.500 2.500Z" fill="#c8a478"/><path d="M3 3L8 4M3 6L9 7M4 9L10 10M4 12H11" stroke="#a88458" stroke-width=".7"/></g><g transform="translate(1212.5 202) scale(1)"><path d="M0 11L8.500 7L17 11L8.500 16Z" fill="#a01010"/><path d="M0 11L8.500 16L17 11V12.500L8.500 17.500L0 12.500Z" fill="#600808"/><path d="M6 10H11L8.500 13.500Z" fill="#f8d020"/><path d="M8.500 7V11" stroke="#f8d020" stroke-width="1.800"/><path d="M0 5L8.500 1L17 5L8.500 9.500Z" fill="#7880d8" stroke="#4850a8" stroke-width=".5"/></g><g transform="translate(1242.5 203) scale(1)"><path d="M0 0H8L12 4V16H0Z" fill="url(#rgdoc)"/><path d="M8 0V4H12Z" fill="#f2f5fa"/><rect x="4.7" y="11" width="3.600" height="3.500" fill="#402008"/><circle cx="6.5" cy="8" r="4" fill="url(#rgbulb)"/></g><g transform="translate(1270 203.5) scale(1)"><rect x="0" y="0" width="14.500" height="14.500" fill="#000"/><circle cx="4" cy="3" r="1.500" fill="#a0a0a0"/><circle cx="10" cy="3" r="1.500" fill="#a0a0a0"/><circle cx="7" cy="5" r="3.200" fill="#b8b8b8"/><ellipse cx="7" cy="10.500" rx="5" ry="4" fill="#c4c4c4"/><ellipse cx="7" cy="10.500" rx="2.500" ry="2.500" fill="#888"/><path d="M11 4H14M12.500 4V6.500" stroke="#fff" stroke-width=".8"/></g><g transform="translate(1298.5 203.5) scale(1)"><path d="M1 3H10L9 12C7 13 4 13 2 12Z" fill="#4888e0"/><ellipse cx="5.500" cy="3" rx="5" ry="2" fill="#88b8f0" stroke="#3870c8" stroke-width=".6"/><ellipse cx="5.500" cy="3" rx="3" ry="1" fill="#d0e4fc"/></g><rect x="1322.5" y="201.5" width="18" height="17.5" fill="#f6f6f6"/><path d="M1323.0 219.0V202.0H1340.5" stroke="#909090" fill="none"/><path d="M1323.0 218.5H1340.0V202.0" stroke="#fff" fill="none"/><rect x="1326.2" y="213.3" width="3.600" height="3.500" fill="#402008"/><circle cx="1328" cy="210" r="4.3" fill="url(#rgbulb)"/><rect x="1332.7" y="211.1" width="3.600" height="3.500" fill="#402008"/><circle cx="1334.5" cy="207.5" r="4.6" fill="url(#rgbulb)"/><g transform="translate(1111.5 226.5) scale(1)"><path d="M0 12C0 4 5 1 10 1C16 1 20 5 20.500 11L16 13C15 8 13 5 9.500 5C6 5 4.500 8 4.500 12Z" fill="#c8a858"/><path d="M4.500 12C4.500 8 6 5 9.500 5C13 5 15 8 16 13C12 13.500 8 13 4.500 12Z" fill="#8088d8"/><path d="M0 12C0 4 5 1 10 1C16 1 20 5 20.500 11" stroke="#f0e0a0" stroke-width=".8" fill="none"/><path d="M0 17.500H7M3.500 14V21" stroke="#000" stroke-width="1.200"/></g><rect x="1322.5" y="228" width="18" height="17" fill="#f6f6f6"/><path d="M1323.0 245V228.5H1340.5" stroke="#909090" fill="none"/><path d="M1323.0 244.5H1340.0V228.5" stroke="#fff" fill="none"/><rect x="1329.7" y="239.5" width="3.600" height="3.500" fill="#402008"/><circle cx="1331.5" cy="235.5" r="5" fill="url(#rgbulb)"/></svg><!--/RI-->
<!--STATUS-->
<div class="a" style="left:1024px;top:751px;width:66px;height:18px;border:1px solid;border-color:#a0a0a0 #fff #fff #a0a0a0;font-size:11.500px;padding:2px 0 0 1px">X:</div><div class="a" style="left:1093px;top:751px;width:66px;height:18px;border:1px solid;border-color:#a0a0a0 #fff #fff #a0a0a0;font-size:11.500px;padding:2px 0 0 1px">Y:</div><div class="a" style="left:1161px;top:751px;width:60px;height:18px;border:1px solid;border-color:#a0a0a0 #fff #fff #a0a0a0;font-size:11.500px;padding:2px 0 0 1px">Z:</div><div class="a" style="left:1224px;top:751px;width:70px;height:18px;border:1px solid;border-color:#a0a0a0 #fff #fff #a0a0a0;font-size:11.500px;padding:2px 0 0 1px"></div><div class="a" style="left:1297px;top:751px;width:69px;height:18px;border:1px solid;border-color:#a0a0a0 #fff #fff #a0a0a0;font-size:11.500px;padding:2px 0 0 1px"></div>
</body></html>
